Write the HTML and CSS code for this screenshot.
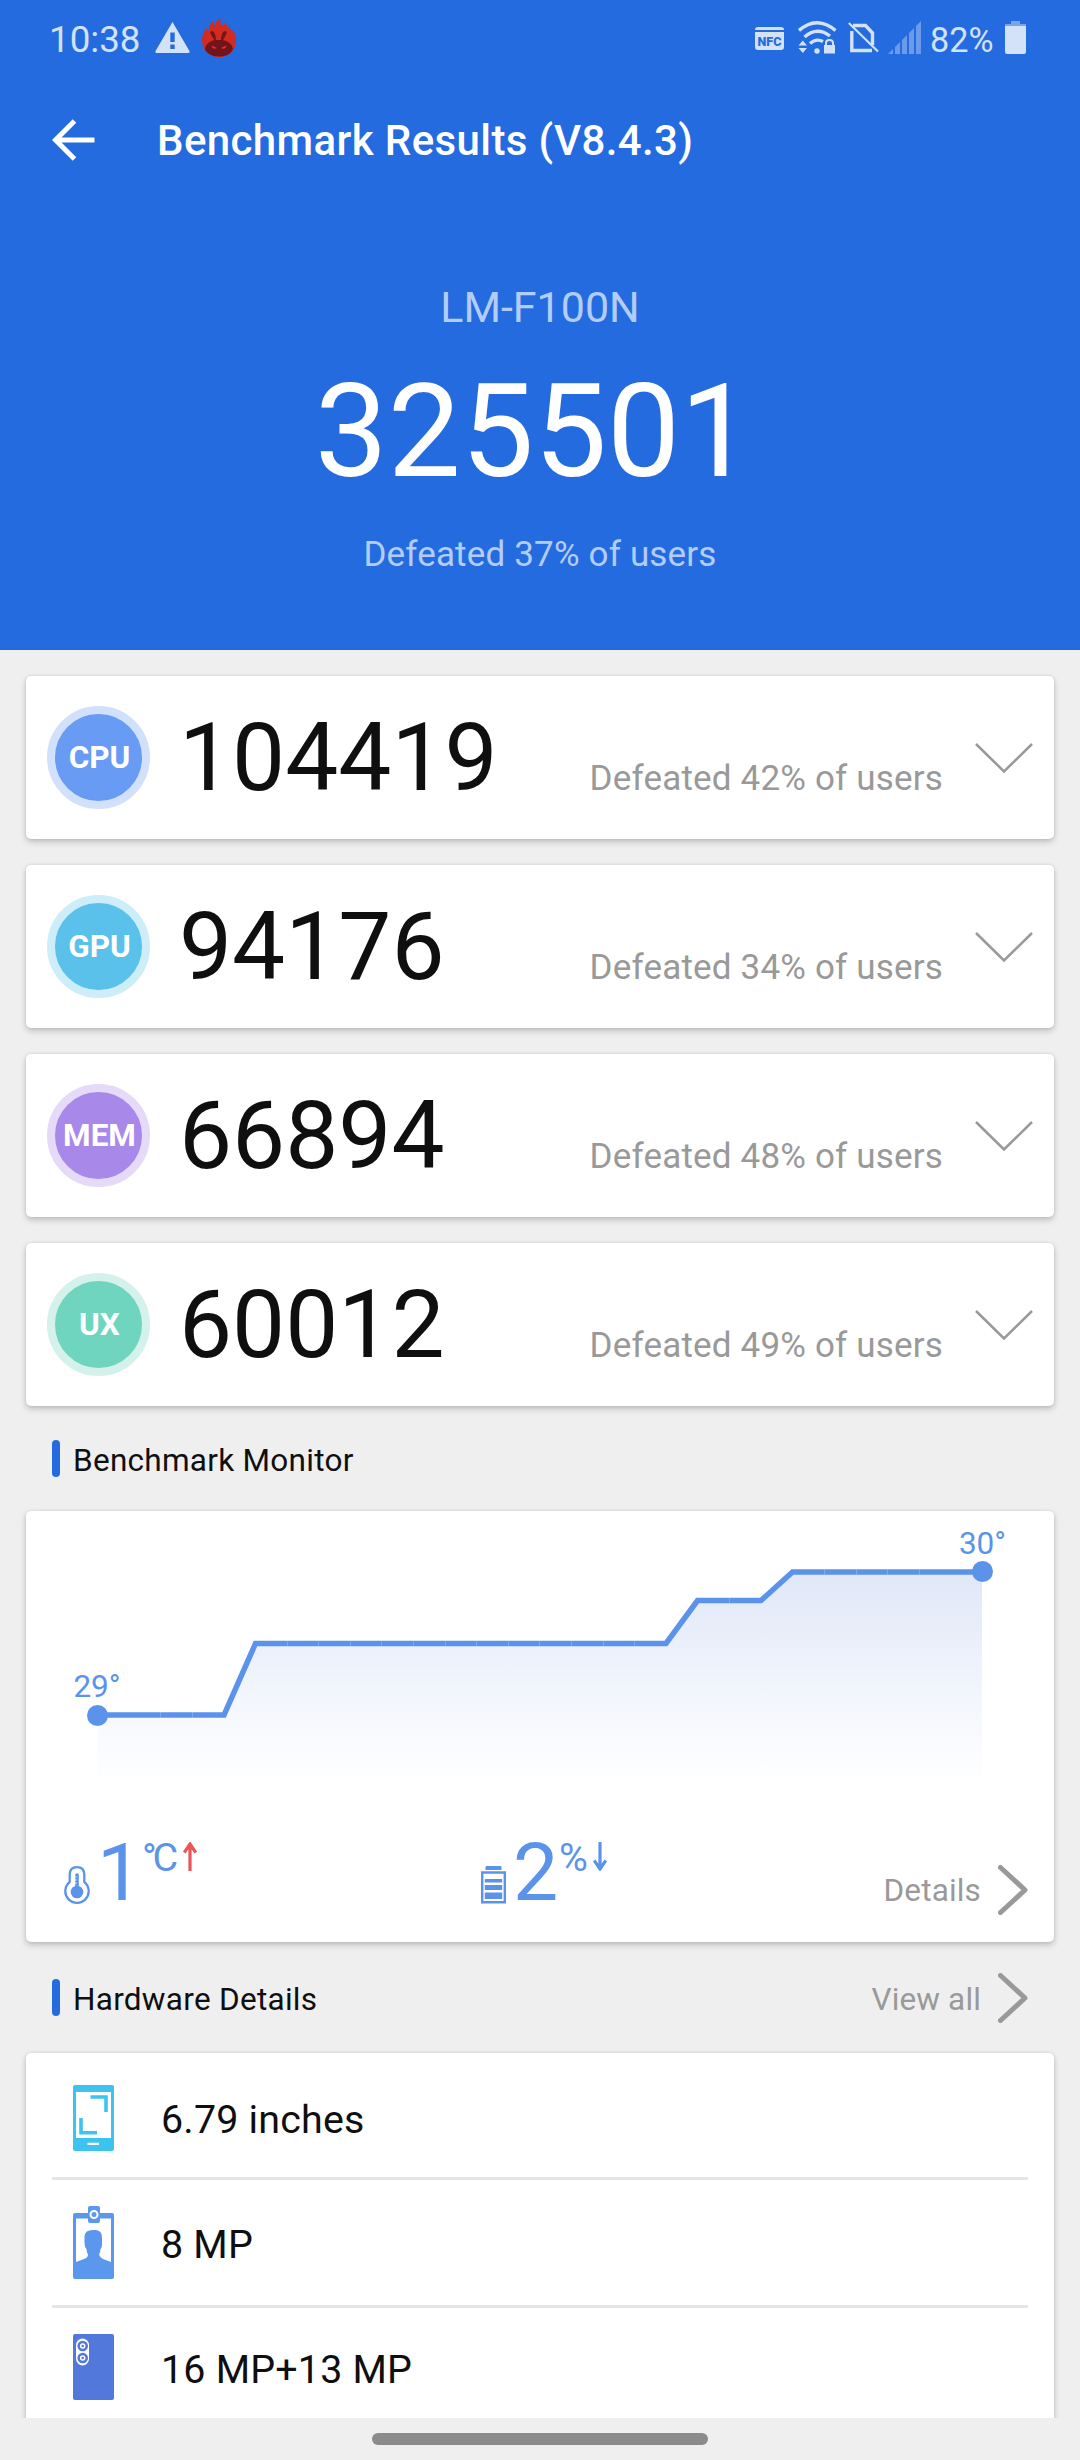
FILE: index.html
```html
<!DOCTYPE html>
<html lang="en">
<head>
    <meta charset="UTF-8">
    <meta name="viewport" content="width=device-width, initial-scale=1.0">
    <title>Benchmark Results</title>
    <link rel="stylesheet" href="styles.css">
</head>
<body>
    <header class="header">
        <div class="status-bar">
            <span class="clock">10:38</span>
            <svg class="status-icon warning" width="35" height="31" viewBox="0 0 35 31">
                <path fill="#d3e1f9" fill-rule="evenodd" d="M17.500 0 34.600 29.300Q35 31 33.500 31H1.500Q0 31 .4 29.300ZM15.300 10.500V20H19.700V10.500ZM15.300 22.500V27H19.700V22.500Z"/>
            </svg>
            <svg class="status-icon antutu" width="34" height="39" viewBox="0 0 34 39">
                <path fill="#d22b20" d="M17 39C6 39 0 31 0 22 0 17 2 14 4 10L7 13Q6 8 11 3L13 9Q13 3 18 0 18 5 20 8L24 4 25 10 28 7Q27 12 30 13L31 12C33 16 34 19 34 23 34 32 27 39 17 39Z"/>
                <path fill="#73141a" d="M17 38.500C10 38.500 4 35 3 31 4 26 8 23 12.500 22.300L9.500 17.500Q7 13 10 13 13.500 13.500 14 22H19Q19.500 13.500 23 13 26 13 23.500 17.500L21 22.300C26 23 30 26 31 31 29 36 24 38.500 17 38.500Z"/>
                <path fill="#e0352a" d="M9.500 27.500 15 30Q11 32.500 9.500 27.500ZM24.500 27.500 19 30Q23 32.500 24.500 27.500Z"/>
            </svg>
            <span class="spacer"></span>
            <svg class="status-icon nfc" width="29" height="23" viewBox="0 0 29 23">
                <path fill="#d3e1f9" d="M0 3Q0 0 3 0H26Q29 0 29 3ZM0 5H29V20Q29 23 26 23H3Q0 23 0 20Z"/>
                <text class="nfc-text" x="14.500" y="19" text-anchor="middle">NFC</text>
            </svg>
            <svg class="status-icon wifi" width="39" height="33" viewBox="0 0 39 33">
                <g fill="none" stroke="#d3e1f9" stroke-width="3.400">
                    <path d="M1 9.500Q19 -6 37.500 9.500"/>
                    <path d="M6.500 16Q19 5 32 15"/>
                    <path d="M12 22.500Q18 17 25 20.500"/>
                </g>
                <circle cx="19" cy="30" r="2.700" fill="#d3e1f9"/>
                <path fill="#d3e1f9" d="M.5 24.500 4.800 19.500 9 24.500ZM.5 27 4.800 32 9 27ZM26 24H37V32.500H26Z"/>
                <path fill="none" stroke="#d3e1f9" stroke-width="2" d="M28 25V22Q28 19 31.500 19T35 22V25"/>
            </svg>
            <svg class="status-icon no-sim" width="31" height="31" viewBox="0 0 31 31">
                <path fill="none" stroke="#d3e1f9" stroke-width="3.400" d="M5 3.500H17.500L24.500 11V23M3.800 9V28.500H24"/>
                <path stroke="#d3e1f9" stroke-width="2.200" d="M.8 1 30 29.500"/>
            </svg>
            <svg class="status-icon signal" width="33" height="33" viewBox="0 0 33 33">
                <path fill="#6b9aec" d="M0 33 5 28V33ZM7 26 12 21V33H7ZM14 19 19 14V33H14ZM21 12 26 7V33H21ZM28 5 33 0V33H28Z"/>
            </svg>
            <span class="percent">82%</span>
            <svg class="status-icon battery" width="21" height="33" viewBox="0 0 21 33">
                <path fill="#79a4ed" d="M6 0H15V3H21V5H0V3H6Z"/>
                <path fill="#d3e1f9" d="M0 5H21V31Q21 33 19 33H2Q0 33 0 31Z"/>
            </svg>
        </div>
        <div class="toolbar">
            <svg class="back" width="43" height="42" viewBox="0 0 43 42">
                <path fill="none" stroke="#fff" stroke-width="5" d="M22.500 2 3.500 21 22.500 40M3.500 21H42.500"/>
            </svg>
            <h1 class="title">Benchmark Results (V8.4.3)</h1>
        </div>
        <div class="hero">
            <div class="device">LM-F100N</div>
            <div class="total">325501</div>
            <div class="total-rank">Defeated 37% of users</div>
        </div>
    </header>

    <main class="content">
        <section class="scores">
            <div class="card score-card">
                <div class="badge cpu">CPU</div>
                <div class="score-text">
                    <span class="score">104419</span>
                    <span class="rank">Defeated 42% of users</span>
                </div>
                <svg class="expand" width="58" height="30" viewBox="0 0 58 30"><path d="M1 1 29 28.500 57 1"/></svg>
            </div>
            <div class="card score-card">
                <div class="badge gpu">GPU</div>
                <div class="score-text">
                    <span class="score">94176</span>
                    <span class="rank">Defeated 34% of users</span>
                </div>
                <svg class="expand" width="58" height="30" viewBox="0 0 58 30"><path d="M1 1 29 28.500 57 1"/></svg>
            </div>
            <div class="card score-card">
                <div class="badge mem">MEM</div>
                <div class="score-text">
                    <span class="score">66894</span>
                    <span class="rank">Defeated 48% of users</span>
                </div>
                <svg class="expand" width="58" height="30" viewBox="0 0 58 30"><path d="M1 1 29 28.500 57 1"/></svg>
            </div>
            <div class="card score-card">
                <div class="badge ux">UX</div>
                <div class="score-text">
                    <span class="score">60012</span>
                    <span class="rank">Defeated 49% of users</span>
                </div>
                <svg class="expand" width="58" height="30" viewBox="0 0 58 30"><path d="M1 1 29 28.500 57 1"/></svg>
            </div>
        </section>

        <div class="section-head monitor-head">
            <h2 class="section-title"><span>Benchmark Monitor</span></h2>
        </div>
        <section class="card monitor">
            <svg class="chart" width="1028" height="289" viewBox="0 0 1028 289">
                <defs>
                    <linearGradient id="fade" x1="0" y1="61" x2="0" y2="272" gradientUnits="userSpaceOnUse">
                        <stop offset="0" stop-color="#e0e7f7"/>
                        <stop offset=".6" stop-color="#f3f6fd"/>
                        <stop offset="1" stop-color="#fff"/>
                    </linearGradient>
                </defs>
                <path fill="url(#fade)" d="M71.500 204H198L229.500 132.500H640L671.500 89.500H735L766.500 61H956V272H71.500Z"/>
                <path class="line" d="M71.500 204H198L229.500 132.500H640L671.500 89.500H735L766.500 61H956"/>
                <!-- joints between the samples -->
                <path class="ticks" d="M134.500 201V207M166.500 201V207M261.500 130V135M292.500 130V135M324.500 130V135M355.500 130V135M387.500 130V135M419.500 130V135M450.500 130V135M482.500 130V135M513.500 130V135M545.500 130V135M577.500 130V135M608.500 130V135M703.500 87V92M798.500 58V64M830.500 58V64M861.500 58V64M893.500 58V64"/>
                <circle cx="71.500" cy="204.500" r="10.500" fill="#5b93eb"/>
                <circle cx="956.500" cy="60.500" r="10.500" fill="#5b93eb"/>
                <text class="temp" x="71" y="186" text-anchor="middle">29°</text>
                <text class="temp" x="956.500" y="43" text-anchor="middle">30°</text>
            </svg>
            <div class="stats">
                <div class="stat heat">
                    <svg class="stat-icon" width="26" height="39" viewBox="0 0 26 39">
                        <path fill="none" stroke="#5b93eb" stroke-width="2.300" d="M5.700 16V8.500Q6 1.200 13 1.200T20.300 8.500V16A11.700 11.700 0 1 1 5.700 16Z"/>
                        <circle cx="13" cy="26" r="6.300" fill="#5b93eb"/>
                        <path stroke="#5b93eb" stroke-width="3.600" stroke-linecap="round" d="M13 9V25"/>
                        <path stroke="#fff" stroke-width="1" d="M11 11H12.500M11 14H12.500M11 17H12.500"/>
                    </svg>
                    <span class="stat-value">1</span>
                    <span class="stat-unit"><span class="degree">°</span>C</span>
                    <svg class="trend up" width="14" height="29" viewBox="0 0 14 29"><path d="M7 29V2M1.200 10.500 7 2 12.800 10.500"/></svg>
                </div>
                <div class="stat power">
                    <svg class="stat-icon" width="25" height="38" viewBox="0 0 25 38">
                        <path fill="#5b93eb" d="M5.500 0H19.500Q20.500 0 20.500 1V4H4.500V1Q4.500 0 5.500 0ZM3.800 13H21.200V16.500H3.800ZM3.800 19H21.200V24H3.800ZM3.800 26.500H21.200V33H3.800Z"/>
                        <path fill="none" stroke="#5b93eb" stroke-width="2.400" d="M1.200 6.500H23.800V36.200H1.200Z"/>
                    </svg>
                    <span class="stat-value">2</span>
                    <span class="stat-unit">%</span>
                    <svg class="trend down" width="14" height="29" viewBox="0 0 14 29"><path d="M7 0V27M1.200 18.500 7 27 12.800 18.500"/></svg>
                </div>
                <a class="more">Details
                    <svg class="arrow" width="30" height="50" viewBox="0 0 30 50"><path d="M2.500 2.500 27 25 2.500 47.500"/></svg>
                </a>
            </div>
        </section>

        <div class="section-head hardware-head">
            <h2 class="section-title"><span>Hardware Details</span></h2>
            <a class="more"><span>View all</span>
                <svg class="arrow" width="30" height="50" viewBox="0 0 30 50"><path d="M2.500 2.500 27 25 2.500 47.500"/></svg>
            </a>
        </div>
        <section class="card hardware">
            <div class="spec">
                <svg width="41" height="73" viewBox="0 0 41 73">
                    <path fill="#3dc3ef" fill-rule="evenodd" d="M2 4H39Q41 4 41 6V68Q41 70 39 70H2Q0 70 0 68V6Q0 4 2 4ZM3 11V57H38V11ZM14.500 61.800V64H26V61.800Z"/>
                    <path fill="none" stroke="#3dc3ef" stroke-width="3.600" d="M17.500 16H33V31M8 37V51.800H24"/>
                </svg>
                <span>6.79 inches</span>
            </div>
            <div class="spec">
                <svg width="41" height="73" viewBox="0 0 41 73">
                    <path fill="#5b97ec" fill-rule="evenodd" d="M2 7H39Q41 7 41 9V71Q41 73 39 73H2Q0 73 0 71V9Q0 7 2 7ZM3 12.500V56L11 53Q15 51.500 15 48.500 13.500 46 13.500 43 11.500 41 11.500 37V30Q12 24 20 24H23Q29 25 29 31V38Q29 42 27.500 43 27.500 46 26 48.500 26.500 51 30 53L38 56V12.500Z"/>
                    <rect x="15" y="0" width="12" height="17" rx="2" fill="#5b97ec"/>
                    <circle cx="21" cy="8.500" r="3.500" fill="none" stroke="#fff" stroke-width="2"/>
                </svg>
                <span>8 MP</span>
            </div>
            <div class="spec">
                <svg width="41" height="73" viewBox="0 0 41 73">
                    <rect y="3" width="41" height="66" rx="2" fill="#5378dc"/>
                    <rect x="3" y="7.500" width="13" height="27" rx="6.500" fill="#fff"/>
                    <circle cx="9.700" cy="15" r="5.300" fill="#5378dc"/>
                    <circle cx="9.700" cy="27" r="5.300" fill="#5378dc"/>
                    <circle cx="9.700" cy="15" r="2" fill="none" stroke="#fff" stroke-width="1.500"/>
                    <circle cx="9.700" cy="27" r="2" fill="none" stroke="#fff" stroke-width="1.500"/>
                </svg>
                <span>16 MP+13 MP</span>
            </div>
        </section>
    </main>

    <nav class="nav-bar">
        <div class="nav-pill"></div>
    </nav>
</body>
</html>
```
FILE: styles.css
```css
* {
    box-sizing: border-box;
}
body {
    display: flex;
    flex-direction: column;
    width: 1080px;
    height: 2460px;
    margin: 0;
    overflow: hidden;
    background-color: #efefef;
    font-family: Roboto, sans-serif;
    color: #0f0f0f;
}
svg {
    display: block;
    flex: none;
}
h1, h2 {
    margin: 0;
}

/* header */
.header {
    height: 650px;
    flex: none;
    background-color: #256be0;
    color: #fff;
}
.status-bar {
    display: flex;
    align-items: center;
    height: 79px;
    padding: 0 54px 0 49px;
    color: #d3e1f9;
}
.status-icon {
    margin-bottom: 4px;
}
.clock {
    width: 106px;
    font-size: 36.75px;
}
.antutu {
    margin-left: 12px;
}
.spacer {
    flex: 1;
}
.nfc {
    margin-bottom: 2px;
}
.nfc-text {
    font-size: 12.5px;
    font-weight: 900;
    fill: #256be0;
}
.wifi {
    margin-left: 14px;
}
.no-sim {
    margin-left: 11px;
}
.signal {
    margin-left: 9px;
}
.percent {
    width: 75px;
    margin-left: 9px;
    font-size: 34.2px;
}
.toolbar {
    display: flex;
    align-items: center;
    height: 121px;
    padding-left: 52px;
}
.title {
    margin: 3px 0 0 62px;
    font-size: 42px;
    font-weight: 500;
    line-height: 50px;
    letter-spacing: 0.38px;
}
.hero {
    padding-top: 82px;
    text-align: center;
}
.device {
    font-size: 43px;
    line-height: 50px;
    color: #b3cdfb;
}
.total {
    margin: 35px 12px 38px 0;
    font-size: 130px;
    line-height: 130px;
}
.total-rank {
    font-size: 35px;
    line-height: 40px;
    letter-spacing: 0.17px;
    color: #b3cdfb;
}

/* cards */
.content {
    flex: 1;
    min-height: 0;
    padding: 26px 26px 0;
    overflow: hidden;
}
.card {
    background-color: #fff;
    border-radius: 5px;
    box-shadow: 0 3px 6px rgba(0, 0, 0, 0.2), 0 0 3px rgba(0, 0, 0, 0.1);
}
.scores {
    display: grid;
    gap: 26px;
}
.score-card {
    display: flex;
    align-items: center;
    height: 163px;
    padding: 0 21px;
}
.badge {
    display: flex;
    align-items: center;
    justify-content: center;
    width: 103px;
    height: 103px;
    padding-left: 2px;
    border: 8px solid;
    border-radius: 50%;
    color: #fff;
    font-size: 31.5px;
    font-weight: 700;
}
.cpu {
    background-color: #679bf4;
    border-color: #d1e1fc;
}
.gpu {
    background-color: #5ac2ea;
    border-color: #cdedf9;
}
.mem {
    background-color: #a888e9;
    border-color: #e5dbf8;
}
.ux {
    background-color: #70d5be;
    border-color: #d4f2eb;
}
.score-text {
    display: flex;
    flex: 1;
    align-items: baseline;
    justify-content: space-between;
    margin: 0 32px 0 29px;
}
.score {
    font-size: 94.5px;
    line-height: 110px;
}
.rank {
    font-size: 35px;
    letter-spacing: 0.18px;
    color: #999;
}
.expand path {
    fill: none;
    stroke: #999;
    stroke-width: 2.5;
}

/* section headings */
.section-head {
    display: flex;
    align-items: center;
    justify-content: space-between;
    padding: 0 26px;
}
.section-head span {
    padding-top: 3px;
}
.monitor-head {
    height: 105px;
}
.hardware-head {
    height: 111px;
}
.section-title {
    display: flex;
    align-items: center;
    gap: 13px;
    font-size: 31.5px;
    font-weight: 400;
    letter-spacing: 0.28px;
}
.section-title::before {
    content: "";
    width: 8px;
    height: 37px;
    border-radius: 4px;
    background-color: #256be0;
}
.more {
    display: flex;
    align-items: center;
    gap: 17px;
    font-size: 31.5px;
    letter-spacing: 0.15px;
    color: #999;
}
.arrow path {
    fill: none;
    stroke: #999;
    stroke-width: 5;
    stroke-linecap: round;
    stroke-linejoin: round;
}

/* temperature monitor */
.monitor {
    height: 431px;
}
.line {
    fill: none;
    stroke: #5b93eb;
    stroke-width: 5.5;
}
.ticks {
    stroke: #fff;
    stroke-opacity: 0.2;
}
.temp {
    font-size: 31.5px;
    fill: #5b93eb;
}
.stats {
    display: grid;
    grid-template-columns: 417px 1fr auto;
    height: 142px;
    padding: 0 26px 0 38px;
    color: #5b93eb;
}
.stat {
    display: flex;
    align-items: flex-start;
    padding-top: 42px;
}
.stat-icon {
    margin-top: 24px;
}
.stat-value {
    width: 45px;
    margin: -16px 0 0 7px;
    font-size: 80.5px;
    line-height: 94px;
}
.power .stat-value {
    width: 47px;
}
.stat-unit {
    margin: -7px 0 0 -1px;
    font-size: 39.4px;
    line-height: 46px;
}
.heat .stat-unit {
    margin-left: 0;
}
.degree {
    letter-spacing: -4.3px;
}
.trend {
    margin-left: 5px;
}
.trend path {
    fill: none;
    stroke-width: 3.2;
}
.up {
    stroke: #ec5555;
}
.down {
    stroke: #5b93eb;
}
.stats .more {
    height: 50px;
    margin-top: 65px;
}

/* hardware list */
.hardware {
    height: 500px;
    padding: 0 26px;
}
.spec {
    display: flex;
    align-items: center;
    gap: 47px;
    height: 128px;
    padding-left: 21px;
    border-bottom: 3px solid #e5e5e5;
    font-size: 39.4px;
    letter-spacing: 0.2px;
}
.spec span {
    padding-top: 4px;
}
.spec:first-child {
    height: 127px;
    padding-top: 5px;
}
.spec:last-child {
    padding-bottom: 6px;
}

/* gesture navigation */
.nav-bar {
    display: flex;
    justify-content: center;
    height: 42px;
    flex: none;
    padding-top: 15px;
}
.nav-pill {
    width: 336px;
    height: 12px;
    border-radius: 6px;
    background-color: #8b8b8b;
}
```
